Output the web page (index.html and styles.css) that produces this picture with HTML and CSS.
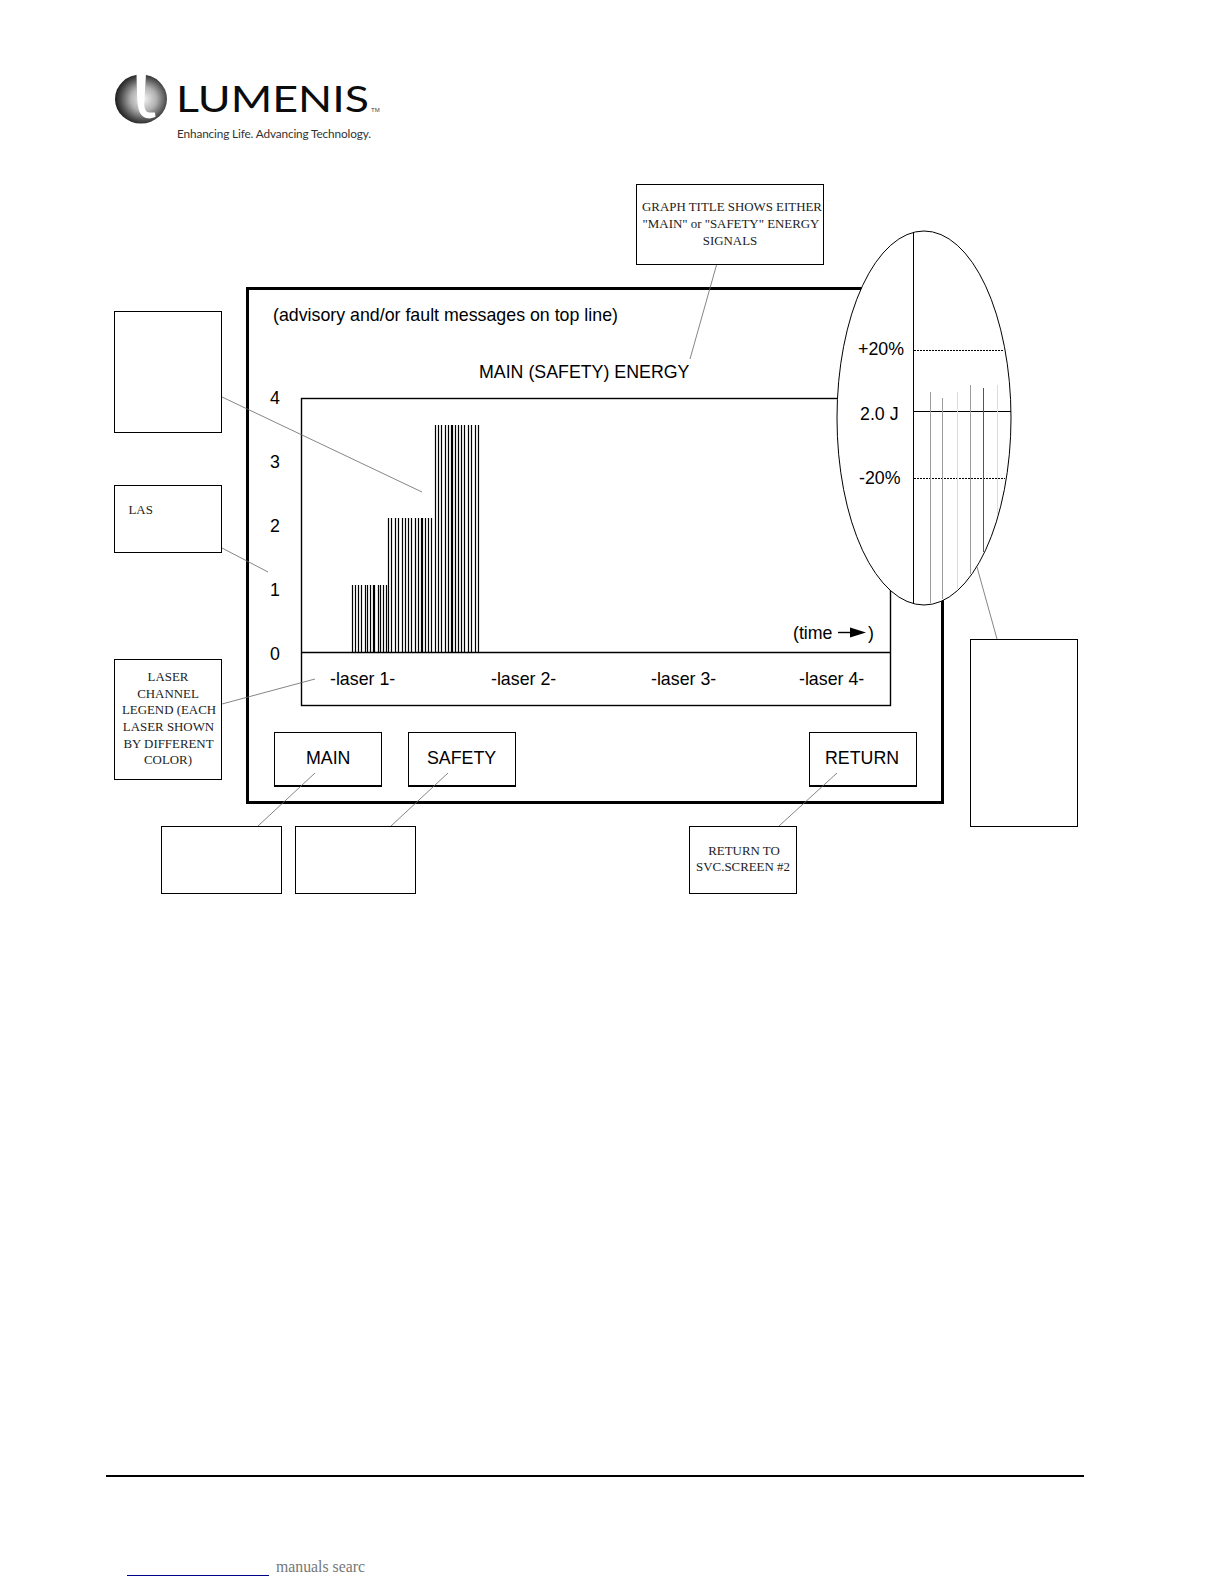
FILE: index.html
```html
<!DOCTYPE html>
<html lang="en">
<head>
<meta charset="utf-8">
<title>Lumenis service screen diagram</title>
<link rel="stylesheet" href="styles.css">
</head>
<body>
<main class="page">
  <header class="brand">
    <svg class="brand-logo" viewBox="110 70 280 75" width="280" height="75" role="img" aria-label="Lumenis logo">
      <defs>
        <radialGradient id="orb" cx="0.55" cy="0.5" r="0.55">
          <stop offset="0" stop-color="#f4f4f4"/>
          <stop offset="0.45" stop-color="#b0b0b0"/>
          <stop offset="0.8" stop-color="#4c4c4c"/>
          <stop offset="1" stop-color="#1c1c1c"/>
        </radialGradient>
      </defs>
      <ellipse cx="141" cy="99" rx="26" ry="24.5" fill="url(#orb)"/>
      <path class="logo-swoosh" d="M136.5 74C137 90 137 100 138 106C139 114 143 118.500 150 118.500L155.500 117L155 112.500L149.500 112.500C145.500 112.500 144 108 144.300 102L146 74Z"/>
      <text class="logo-name" x="176" y="112" textLength="193" lengthAdjust="spacingAndGlyphs">LUMENIS</text>
      <text class="logo-tm" x="371" y="112">TM</text>
      <text class="logo-tag" x="177" y="138" textLength="194" lengthAdjust="spacing">Enhancing Life. Advancing Technology.</text>
    </svg>
  </header>

  <svg class="diagram" viewBox="0 170 1224 740" width="1224" height="740" role="img" aria-label="Energy graph service screen">
    <rect class="note" x="636.500" y="184.500" width="187" height="80"/>
    <text class="serif" x="732" y="211">GRAPH TITLE SHOWS EITHER</text>
    <text class="serif" x="731" y="228">"MAIN" or "SAFETY" ENERGY</text>
    <text class="serif" x="730" y="245">SIGNALS</text>

    <rect class="screen" x="247.500" y="288.500" width="695" height="514"/>

    <text class="ui" x="273" y="321">(advisory and/or fault messages on top line)</text>
    <text class="ui" x="479" y="378">MAIN (SAFETY) ENERGY</text>

    <text class="ui" x="270" y="404">4</text>
    <text class="ui" x="270" y="468">3</text>
    <text class="ui" x="270" y="532">2</text>
    <text class="ui" x="270" y="596">1</text>
    <text class="ui" x="270" y="660">0</text>

    <rect class="graph" x="301.500" y="398.500" width="589" height="307"/>
    <path class="graph" d="M301.500 652.500H890.500"/>

    <path class="bars" d="M352.500 585V652M355.500 585V652M358.500 585V652M361.500 585V652M365.500 585V652M367.500 585V652M370.500 585V652M373.500 585V652M374.500 585V652M378.500 585V652M380.500 585V652M383.500 585V652M386.500 585V652"/>
    <path class="bars" d="M388.500 518V652M391.500 518V652M395.500 518V652M398.500 518V652M402.500 518V652M405.500 518V652M408.500 518V652M411.500 518V652M415.500 518V652M418.500 518V652M421.500 518V652M422.500 518V652M425.500 518V652M428.500 518V652M431.500 518V652"/>
    <path class="bars" d="M435.500 425V652M438.500 425V652M441.500 425V652M445.500 425V652M448.500 425V652M451.500 425V652M452.500 425V652M455.500 425V652M458.500 425V652M461.500 425V652M464.500 425V652M468.500 425V652M471.500 425V652M475.500 425V652M478.500 425V652"/>

    <text class="ui" x="793" y="639">(time</text>
    <path class="graph" d="M838 632.500H852"/>
    <path class="arrow" d="M850 627.500L866 632.500L850 637.500Z"/>
    <text class="ui" x="868" y="639">)</text>

    <text class="ui" x="330" y="685">-laser 1-</text>
    <text class="ui" x="491" y="685">-laser 2-</text>
    <text class="ui" x="651" y="685">-laser 3-</text>
    <text class="ui" x="799" y="685">-laser 4-</text>

    <rect class="btn" x="274.500" y="732.500" width="107" height="53"/>
    <rect class="btn" x="408.500" y="732.500" width="107" height="53"/>
    <rect class="btn" x="809.500" y="732.500" width="107" height="53"/>
    <path class="btn-edge" d="M274 786H382M408 786H516M809 786H917"/>
    <text class="ui" x="306" y="764">MAIN</text>
    <text class="ui" x="427" y="764">SAFETY</text>
    <text class="ui" x="825" y="764">RETURN</text>

    <ellipse class="lens" cx="924" cy="418" rx="87" ry="187"/>
    <path class="lens-axis" d="M913.500 232V604"/>
    <path class="lens-dash" d="M914 350.500H1004M914 478.500H1005"/>
    <path class="lens-axis" d="M914 411.500H1011"/>
    <path class="trace trace-a" d="M930.500 392V603"/>
    <path class="trace trace-a" d="M942.500 398V599"/>
    <path class="trace trace-b" d="M957.500 392V589"/>
    <path class="trace trace-a" d="M970.500 385V574"/>
    <path class="trace trace-c" d="M983.500 388V552"/>
    <path class="trace trace-b" d="M997.500 385V515"/>
    <text class="ui" x="858" y="355">+20%</text>
    <text class="ui" x="860" y="420">2.0 J</text>
    <text class="ui" x="859" y="484">-20%</text>

    <path class="leader" d="M716.500 265L690 359M222 397L422 492M222 548L268 572M222 704L315 679M258 826L315 773M391 826L448 773M779 826L837 773M977 567L997 639"/>

    <rect class="note" x="114.500" y="311.500" width="107" height="121"/>
    <rect class="note" x="114.500" y="485.500" width="107" height="67"/>
    <text class="serif serif-start" x="128.500" y="514">LAS</text>
    <rect class="note" x="114.500" y="659.500" width="107" height="120"/>
    <text class="serif" x="168" y="681">LASER</text>
    <text class="serif" x="168" y="698">CHANNEL</text>
    <text class="serif" x="169" y="714">LEGEND (EACH</text>
    <text class="serif" x="168.500" y="731">LASER SHOWN</text>
    <text class="serif" x="168.500" y="748">BY DIFFERENT</text>
    <text class="serif" x="168" y="764">COLOR)</text>

    <rect class="note" x="161.500" y="826.500" width="120" height="67"/>
    <rect class="note" x="295.500" y="826.500" width="120" height="67"/>
    <rect class="note" x="689.500" y="826.500" width="107" height="67"/>
    <text class="serif" x="744" y="855">RETURN TO</text>
    <text class="serif" x="743" y="871">SVC.SCREEN #2</text>
    <rect class="note" x="970.500" y="639.500" width="107" height="187"/>
  </svg>

  <footer class="footer">
    <div class="footer-rule"></div>
    <div class="footer-note">
      <span class="footer-link"></span>
      <span class="footer-text">manuals searc</span>
    </div>
  </footer>
</main>
</body>
</html>
```

FILE: styles.css
```css
html, body {
  margin: 0;
  padding: 0;
  background: #fff;
}

.page {
  width: 1224px;
  height: 1584px;
  overflow: hidden;
  display: flex;
  flex-direction: column;
}

.brand {
  padding: 70px 0 0 110px;
  height: 170px;
  box-sizing: border-box;
  flex: none;
}

.brand-logo,
.diagram {
  display: block;
}

.logo-swoosh {
  fill: #fff;
}

.logo-name {
  font: 400 36px "Lato", sans-serif;
  fill: #0c0c0c;
}

.logo-tm {
  font: 400 6px "Liberation Sans", sans-serif;
  fill: #444;
}

.logo-tag {
  font: 400 11.8px "Lato", sans-serif;
  fill: #333;
}

.diagram {
  flex: none;
}

.screen {
  fill: #fff;
  stroke: #000;
  stroke-width: 3;
}

.graph {
  fill: none;
  stroke: #000;
  stroke-width: 1.4;
}

.btn,
.note {
  fill: #fff;
  stroke: #000;
  stroke-width: 1;
}

.btn-edge {
  fill: none;
  stroke: #000;
  stroke-width: 2;
}

.bars {
  fill: none;
  stroke: #000;
  stroke-width: 1.2;
}

.arrow {
  fill: #000;
}

.lens {
  fill: #fff;
  stroke: #000;
  stroke-width: 1;
}

.lens-axis {
  fill: none;
  stroke: #000;
  stroke-width: 1;
}

.lens-dash {
  fill: none;
  stroke: #000;
  stroke-width: 1;
  stroke-dasharray: 2 1;
}

.trace {
  fill: none;
  stroke-width: 1;
}

.trace-a {
  stroke: #9c9c9c;
}

.trace-b {
  stroke: #dcdcdc;
}

.trace-c {
  stroke: #555;
}

.leader {
  fill: none;
  stroke: #666;
  stroke-width: 0.8;
}

.ui {
  font: 400 17.8px "Liberation Sans", Arial, sans-serif;
  fill: #000;
}

.serif {
  font: 400 12.9px "Liberation Serif", "Times New Roman", serif;
  fill: #222;
  text-anchor: middle;
}

.serif-start {
  text-anchor: start;
}

.footer {
  flex: none;
  padding: 565px 0 0 106px;
}

.footer-rule {
  width: 978px;
  height: 2px;
  background: #000;
}

.footer-note {
  display: flex;
  align-items: flex-end;
  gap: 7px;
  margin: 82px 0 0 21px;
}

.footer-link {
  width: 142px;
  height: 1px;
  background: #00008b;
  margin-bottom: -1px;
}

.footer-text {
  font: 400 15.8px/16px "Liberation Serif", "Times New Roman", serif;
  color: #777;
}
```
